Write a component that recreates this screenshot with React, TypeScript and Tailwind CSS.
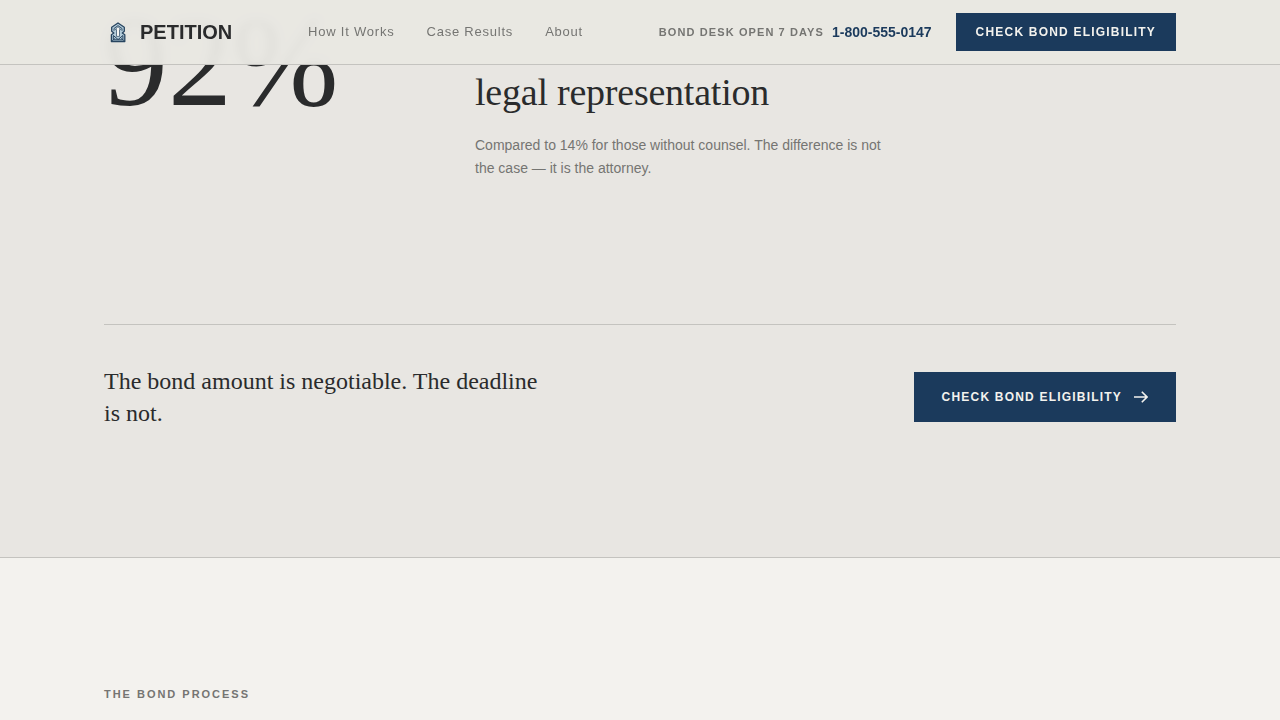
import React from "react";

const navLinks = [
  { label: "How It Works", href: "#process" },
  { label: "Case Results", href: "#results" },
  { label: "About", href: "#about" },
];

function Logo() {
  return (
    <svg width="28" height="28" viewBox="0 0 28 28" fill="none" stroke="#27445f" aria-hidden="true">
      <path d="M14 5 20.300 9.200v4L18.300 15l2.500 1.700v6.800H7.400v-6.800L9.900 15l-2.200-1.800v-4Z" fill="#b4ccda" strokeWidth="1.300" strokeLinejoin="round" />
      <path d="M10 12.800v-2.300L14 7.600l4 2.900v2.300" strokeWidth=".9" />
      <path d="M14 8.600 16.700 11.600h-1.200v6.800h-3v-6.800h-1.200Z" fill="#f6f7f5" strokeWidth=".7" />
      <path d="M9.300 17.500v4.300h9.600v-4.300M9.300 17.500l4.800 4 4.800-4" strokeWidth="1" />
      <path d="M7.600 23.300l3.700-3.200M20.600 23.300l-3.700-3.200" strokeWidth=".8" />
    </svg>
  );
}

function Arrow() {
  return (
    <svg width="16" height="16" viewBox="0 0 16 16" fill="none" stroke="currentColor" strokeWidth="1.600" aria-hidden="true">
      <path d="M2 8h13M9.800 2.800 15 8l-5.200 5.200" />
    </svg>
  );
}

function Header() {
  return (
    <header className="fixed inset-x-0 top-0 z-10 border-b border-[#c4c3bf] bg-[#e8e7e2]/97 backdrop-blur-xs">
      <div className="mx-auto flex h-16 max-w-[1120px] items-center justify-between px-6">
        <a href="#top" className="flex items-center gap-2 text-xl font-bold text-[#2a2b2c]">
          <Logo />
          PETITION
        </a>
        <nav className="flex gap-8">
          {navLinks.map((link) => (
            <a key={link.label} href={link.href} className="text-[13px] tracking-[0.06em] text-[#757572]">
              {link.label}
            </a>
          ))}
        </nav>
        <div className="flex items-center gap-6">
          <div className="flex items-center gap-2">
            <span className="text-[11px] font-bold tracking-widest text-[#757572]">BOND DESK OPEN 7 DAYS</span>
            <a href="tel:18005550147" className="text-sm font-bold text-[#1b3a5c]">
              1-800-555-0147
            </a>
          </div>
          <button className="h-[38px] bg-[#1b3a5c] px-5 text-xs font-bold tracking-widest text-[#f3f2ee]">
            CHECK BOND ELIGIBILITY
          </button>
        </div>
      </div>
    </header>
  );
}

export default function App() {
  return (
    <div className="min-h-screen bg-[#f3f2ee] font-['Liberation_Sans',Arial,sans-serif] text-[#2a2b2c]">
      <Header />
      <main>
        <section id="results" className="border-b border-[#c4c3bf] bg-[#e8e6e2]">
          <div className="mx-auto max-w-[1120px] px-6">
            <div className="grid grid-cols-[307px_1fr] gap-16 pb-36">
              <p className="font-['Liberation_Serif',serif] text-[128px] leading-[124px]">92%</p>
              <div className="pt-[72px]">
                <h2 className="font-['Liberation_Serif',serif] text-[38px] leading-10 tracking-[-0.006em]">
                  legal representation
                </h2>
                <p className="mt-[22px] max-w-[420px] text-sm leading-[23px] text-[#757572]">
                  Compared to 14% for those without counsel. The difference is not the case — it is the attorney.
                </p>
              </div>
            </div>
            <div className="flex items-center justify-between border-t border-[#c4c3bf] pt-10 pb-32">
              <p className="max-w-[440px] font-['Liberation_Serif',serif] text-2xl">
                The bond amount is negotiable. The deadline is not.
              </p>
              <button className="flex h-[50px] items-center gap-2.5 bg-[#1b3a5c] px-7 text-xs font-bold tracking-widest text-[#f3f2ee]">
                CHECK BOND ELIGIBILITY
                <Arrow />
              </button>
            </div>
          </div>
        </section>
        <section id="process" className="mx-auto max-w-[1120px] px-6 pt-32">
          <h2 className="text-[11px] leading-4 font-bold tracking-[0.18em] text-[#757572]">THE BOND PROCESS</h2>
        </section>
      </main>
    </div>
  );
}
